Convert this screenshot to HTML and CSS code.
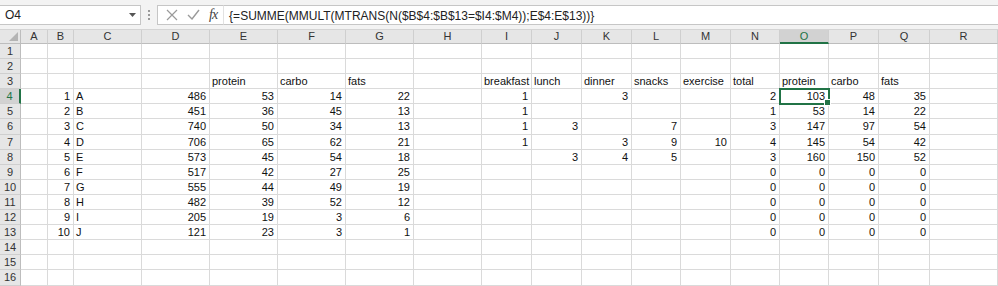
FILE: index.html
```html
<!DOCTYPE html>
<html lang="de">
<head>
  <meta charset="UTF-8" />
  <title>Mappe1 - Excel</title>
  <link rel="stylesheet" href="styles.css">
</head>
<body>
  <div class="toolbar">
    <div class="namebox">
      <span>O4</span>
      <svg class="drop" width="7" height="4" viewBox="0 0 7 4"><path d="M0 0h7L3.5 4z" fill="#555"/></svg>
    </div>
    <div class="grip"><i></i><i></i><i></i></div>
    <div class="fxbox">
      <svg width="12" height="12" viewBox="0 0 12 12"><path d="M1 1l10 10M11 1L1 11" stroke="#9a9a9a" stroke-width="1.2" fill="none"/></svg>
      <svg width="13" height="11" viewBox="0 0 13 11"><path d="M1 6l4 4 7-9" stroke="#9a9a9a" stroke-width="1.4" fill="none"/></svg>
      <span class="fx">fx</span>
    </div>
    <div class="formula">{=SUMME(MMULT(MTRANS(N($B$4:$B$13=$I4:$M4));E$4:E$13))}</div>
  </div>

  <div class="sheet" id="sheet"></div>

  <script>
    const cols = "ABCDEFGHIJKLMNOPQR".split("");
    // row -> { column: value }
    const data = {
      3: { E: "protein", F: "carbo", G: "fats", I: "breakfast", J: "lunch", K: "dinner", L: "snacks", M: "exercise", N: "total", O: "protein", P: "carbo", Q: "fats" },
      4: { B: 1, C: "A", D: 486, E: 53, F: 14, G: 22, I: 1, K: 3, N: 2, O: 103, P: 48, Q: 35 },
      5: { B: 2, C: "B", D: 451, E: 36, F: 45, G: 13, I: 1, N: 1, O: 53, P: 14, Q: 22 },
      6: { B: 3, C: "C", D: 740, E: 50, F: 34, G: 13, I: 1, J: 3, L: 7, N: 3, O: 147, P: 97, Q: 54 },
      7: { B: 4, C: "D", D: 706, E: 65, F: 62, G: 21, I: 1, K: 3, L: 9, M: 10, N: 4, O: 145, P: 54, Q: 42 },
      8: { B: 5, C: "E", D: 573, E: 45, F: 54, G: 18, J: 3, K: 4, L: 5, N: 3, O: 160, P: 150, Q: 52 },
      9: { B: 6, C: "F", D: 517, E: 42, F: 27, G: 25, N: 0, O: 0, P: 0, Q: 0 },
      10: { B: 7, C: "G", D: 555, E: 44, F: 49, G: 19, N: 0, O: 0, P: 0, Q: 0 },
      11: { B: 8, C: "H", D: 482, E: 39, F: 52, G: 12, N: 0, O: 0, P: 0, Q: 0 },
      12: { B: 9, C: "I", D: 205, E: 19, F: 3, G: 6, N: 0, O: 0, P: 0, Q: 0 },
      13: { B: 10, C: "J", D: 121, E: 23, F: 3, G: 1, N: 0, O: 0, P: 0, Q: 0 }
    };

    const sheet = document.getElementById("sheet");

    function cell(cls, text) {
      const d = document.createElement("div");
      d.className = cls;
      if (text !== undefined) d.textContent = text;
      sheet.appendChild(d);
      return d;
    }

    cell("corner");
    cols.forEach(c => cell(c === "O" ? "colhead active" : "colhead", c));

    for (let r = 1; r <= 16; r++) {
      cell(r === 4 ? "rowhead active" : "rowhead", r);
      cols.forEach(c => {
        const v = data[r] && data[r][c];
        let cls = "cell";
        if (typeof v === "number") cls += " num";
        if (r === 4 && c === "O") cls += " selected";
        cell(cls, v);
      });
    }
  </script>
</body>
</html>
```

FILE: styles.css
```css
html, body {
  margin: 0;
  padding: 0;
  background: #fff;
  font-family: "Liberation Sans", Arial, sans-serif;
  overflow: hidden;
}

.toolbar {
  display: flex;
  align-items: center;
  height: 26px;
  padding-bottom: 3px;
  background: #f3f3f3;
  border-bottom: 1px solid #d4d4d4;
  box-sizing: content-box;
}

.namebox {
  display: flex;
  align-items: center;
  justify-content: space-between;
  box-sizing: border-box;
  width: 141px;
  height: 20px;
  margin-top: 3px;
  padding: 0 4px 0 5px;
  background: #fff;
  border: 1px solid #c6c6c6;
  border-left: 0;
  font-size: 12px;
  color: #222;
}

.grip {
  display: flex;
  flex-direction: column;
  gap: 2px;
  width: 16px;
  align-items: center;
  margin-top: 3px;
}

.grip i {
  width: 2px;
  height: 2px;
  background: #9a9a9a;
}

.fxbox {
  display: flex;
  align-items: center;
  gap: 9px;
  box-sizing: border-box;
  height: 20px;
  margin-top: 3px;
  padding: 0 6px 0 8px;
  background: #fff;
  border: 1px solid #c6c6c6;
  border-right: 1px solid #e2e2e2;
}

.fx {
  font-family: "Liberation Serif", serif;
  font-style: italic;
  font-size: 14px;
  color: #444;
  letter-spacing: -1px;
}

.formula {
  flex: 1;
  box-sizing: border-box;
  height: 20px;
  margin-top: 3px;
  padding: 3px 0 0 5px;
  background: #fff;
  border: 1px solid #c6c6c6;
  border-left: 0;
  border-right: 0;
  font-size: 12px;
  color: #222;
  white-space: nowrap;
}

.sheet {
  display: grid;
  grid-template-columns: 21px 27px 26px repeat(6, 68px) 50px 50px 50px 49px 50px 49px 49px 50px 51px 1fr;
  grid-template-rows: 14px;
  grid-auto-rows: 15.1px;
  font-size: 11px;
}

.sheet > div {
  box-sizing: border-box;
  line-height: 15px;
  white-space: nowrap;
  overflow: visible;
}

.corner {
  position: relative;
  background: #e6e6e6;
  border-right: 1px solid #bdbdbd;
  border-bottom: 1px solid #bdbdbd;
}

.corner::after {
  content: "";
  position: absolute;
  right: 2px;
  bottom: 2px;
  border-left: 9px solid transparent;
  border-bottom: 9px solid #b4b4b4;
}

.colhead {
  background: #e6e6e6;
  border-right: 1px solid #cfcfcf;
  border-bottom: 1px solid #bdbdbd;
  text-align: center;
  line-height: 13px !important;
  color: #333;
}

.rowhead {
  background: #e6e6e6;
  border-right: 1px solid #bdbdbd;
  border-bottom: 1px solid #cfcfcf;
  text-align: center;
  color: #333;
}

.colhead.active {
  background: #d2d2d2;
  color: #217346;
  border-bottom: 2px solid #217346;
}

.rowhead.active {
  background: #d2d2d2;
  color: #217346;
  border-right: 2px solid #217346;
}

.cell {
  border-right: 1px solid #dadada;
  border-bottom: 1px solid #dadada;
  padding: 0 2px;
  color: #111;
}

.cell.num {
  text-align: right;
  padding-right: 3px;
}

.cell.selected {
  position: relative;
  outline: 2px solid #217346;
  outline-offset: -1px;
  z-index: 1;
}

.cell.selected::after {
  content: "";
  position: absolute;
  right: -3px;
  bottom: -3px;
  width: 5px;
  height: 5px;
  background: #217346;
  border: 1px solid #fff;
}
```
